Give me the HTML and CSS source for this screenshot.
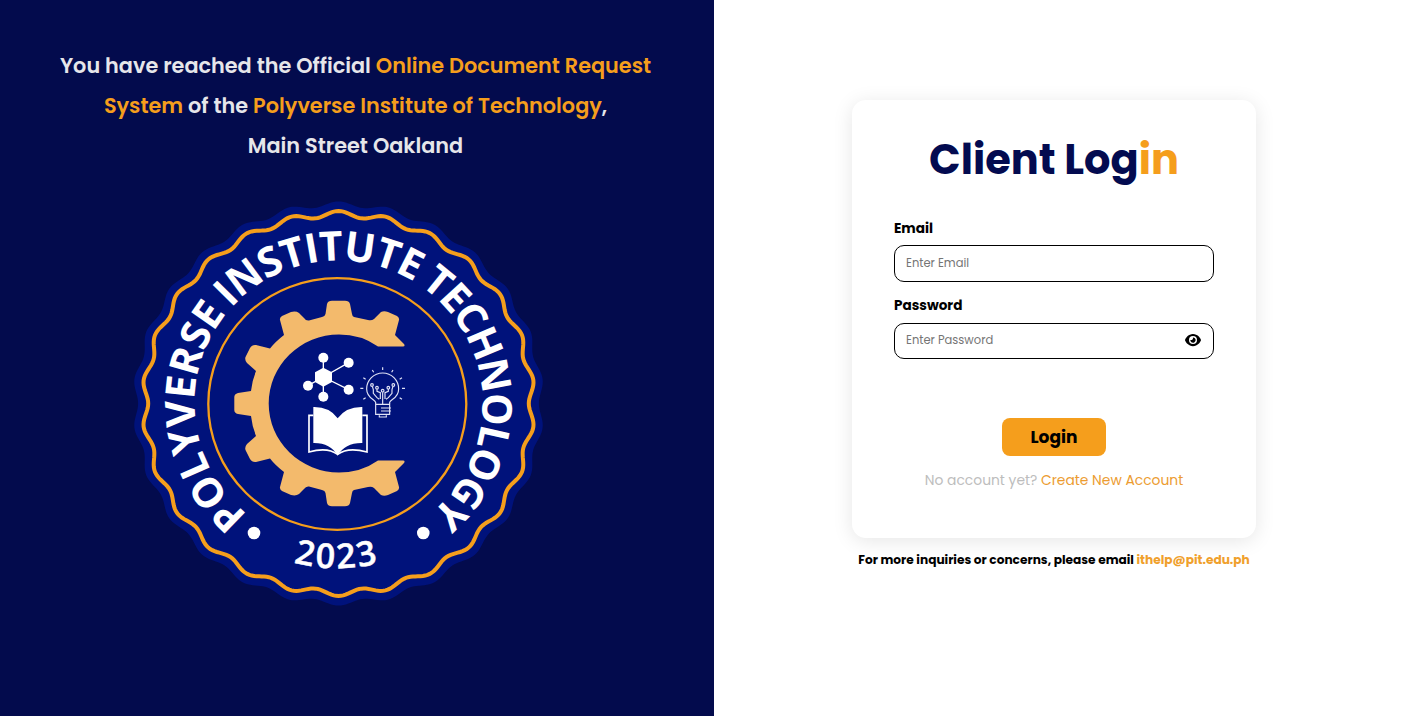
FILE: index.html
```html
<!DOCTYPE html>
<html lang="en">
<head>
<meta charset="utf-8">
<title>Client Login</title>
<link rel="stylesheet" href="styles.css">
</head>
<body>
<main class="page">
  <section class="welcome">
    <h2 class="welcome-text">
      <span class="line">You have reached the Official <em>Online Document Request</em></span>
      <span class="line"><em>System</em> of the <em>Polyverse Institute of Technology</em>,</span>
      <span class="line">Main Street Oakland</span>
    </h2>
    <svg class="seal" viewBox="128 194 422 418" width="422" height="418" role="img" aria-label="Polyverse Institute Technology seal">
      <path id="rim" class="seal-blue"/>
      <path id="wave" class="seal-wave"/>
      <ellipse class="seal-ring" cx="337.3" cy="404" rx="129" ry="125.8"/>
      <path id="nameArc" fill="none" d="M247.900 514.600A144 143 0 1 1 425.200 517.700"/>
      <text class="seal-name"><textPath href="#nameArc" textLength="225" lengthAdjust="spacing">POLYVERSE</textPath></text>
      <text class="seal-name"><textPath href="#nameArc" startOffset="231.6" textLength="201" lengthAdjust="spacing">INSTITUTE</textPath></text>
      <text class="seal-name"><textPath href="#nameArc" startOffset="439" textLength="264" lengthAdjust="spacing">TECHNOLOGY</textPath></text>
      <path id="yearArc" fill="none" d="M221 521A166 166 0 0 0 453 521"/>
      <text class="seal-year"><textPath href="#yearArc" startOffset="50%" text-anchor="middle">2023</textPath></text>
      <circle class="white" cx="254" cy="533" r="6.3"/>
      <circle class="white" cx="423.3" cy="533" r="6.3"/>
      <path class="gear" d="M378 346.5H403Q405.500 346.500 404 344L395 335L399 320Q399.500 317.500 397 316L388 312Q384 310.500 381 312L374 319Q371.500 321 368 320L354 317Q352.300 316.500 352 314L350 304Q349 300.700 345 300.700H332Q328 300.700 327 304L325.500 314Q325 316.500 322 317L309 320.500Q306 321 304 318L299 313Q296 310.700 291 312L282 316Q279.500 317.500 280 320L284 335Q275 342 270 348.500L256 345Q252 344.500 250 348L245.500 357Q244.500 360 247 363L256 371Q252 381 251 391L238 393Q234.300 394 234.300 397V410Q234.300 413 238 414L251 416Q252 426 256 436L247 444Q244.500 447 245.500 450L250 459Q252 462.500 256 462L270 458.500Q275 465 284 472L280 487Q279.500 489.500 282 491L291 495Q296 496.300 299 494L304 489Q306 486 309 486.500L322 490Q325 490.500 325.500 493L327 503Q328 506.300 332 506.300H345Q349 506.300 350 503L352 493Q352.300 490.500 354 490L368 487Q371.500 486 374 488L381 495Q384 496.500 388 495L397 491Q399.500 489.500 399 487L395 472L404 463Q405.500 460.500 403 460.500H378Q361 472.500 339 472.500A70.300 69 0 0 1 339 334.500Q361 334.500 378 346.500Z"/>
      <g transform="translate(290 340) scale(.3333)">
        <path class="link" d="M100 53V170M100 111L176 68M100 111L176 149M100 111L54 137"/>
        <path class="white" d="M100 83L126 97V126L100 140L75 126V97Z"/>
        <circle class="white" cx="100" cy="53" r="15"/><circle class="white" cx="176" cy="68" r="15"/>
        <circle class="white" cx="176" cy="149" r="15"/><circle class="white" cx="100" cy="170" r="15"/>
        <circle class="white" cx="54" cy="137" r="15"/>
        <path class="white" d="M70 201Q119 200 143 235Q168 200 217 201V309Q165 308 143 347Q121 308 70 309Z"/>
        <path class="book-line" d="M70 226H57V336Q112 320 143 343Q174 320 231 336V226H217"/>
        <g class="bulb">
          <path d="M257 192V187C255 178 230 175 230 147A48 48 0 1 1 326 147C326 175 301 178 299 187V192"/>
          <path d="M257 193H299V223H257ZM273 204H303M273 213H303M268 226V231H289V226M278 82V90M247 90L251 97M309 90L305 97M220 113L227 118M336 113L329 118M211 145H220M336 145H345M220 178L227 173M336 178L329 173"/>
          <path d="M278 157V192M247 139L250 149V160L261 173L268 178M261 147V154L271 158V177M309 139L306 149V160L295 173L288 178M295 147V154L285 158V177"/>
          <circle cx="278" cy="152" r="4"/><circle cx="246" cy="135" r="4"/><circle cx="310" cy="135" r="4"/><circle cx="261" cy="143" r="4"/><circle cx="295" cy="143" r="4"/>
        </g>
      </g>
    </svg>
  </section>
  <section class="login">
    <form class="card">
      <h1 class="title">Client Log<span>in</span></h1>
      <label class="label label-email" for="email">Email</label>
      <div class="field"><input id="email" type="text" placeholder="Enter Email"></div>
      <label class="label label-password" for="password">Password</label>
      <div class="field field-password">
        <input id="password" class="password" type="password" placeholder="Enter Password">
        <svg class="eye" viewBox="0 0 576 512" width="16" height="14.200"><path d="M288 32c-80.800 0-145.500 36.800-192.600 80.600C48.600 156 17.300 208 2.500 243.700c-3.300 7.900-3.300 16.700 0 24.600C17.300 304 48.600 356 95.400 399.400C142.500 443.200 207.200 480 288 480s145.500-36.800 192.600-80.600c46.800-43.500 78.100-95.400 93-131.100c3.300-7.900 3.300-16.700 0-24.600c-14.900-35.700-46.200-87.700-93-131.100C433.500 68.800 368.800 32 288 32zM144 256a144 144 0 1 1 288 0 144 144 0 1 1 -288 0zm144-64c0 35.300-28.700 64-64 64c-7.100 0-13.900-1.200-20.300-3.300c-5.500-1.800-11.900 1.600-11.700 7.400c.3 6.900 1.300 13.800 3.200 20.700c13.700 51.200 66.400 81.600 117.600 67.900s81.600-66.400 67.900-117.600c-11.100-41.500-47.800-69.400-88.600-71.100c-5.800-.2-9.200 6.100-7.400 11.700c2.100 6.400 3.300 13.200 3.300 20.300z"/></svg>
      </div>
      <button class="submit" type="button">Login</button>
      <p class="signup">No account yet? <a>Create New Account</a></p>
    </form>
    <p class="help">For more inquiries or concerns, please email <a>ithelp@pit.edu.ph</a></p>
  </section>
</main>
<script src="seal.js"></script>
</body>
</html>
```
FILE: styles.css
```css
* { box-sizing: border-box; margin: 0; }
body { font-family: Poppins, Inter, sans-serif; background: #fff; color: #000; }
.page { display: grid; grid-template-columns: 1fr 1fr; height: 716px; overflow: hidden; }
.welcome { background: #030b4d; padding-top: 46px; display: flex; flex-direction: column; align-items: center; }
.welcome-text { width: 711px; margin-right: 3px; font-size: 20.8px; font-weight: 600; line-height: 40px; color: #e6e6ea; text-align: center; }
.line { display: block; white-space: nowrap; }
.line em { font-style: normal; color: #f59e1c; }
.seal { display: block; margin: 28px 36px 0 0; }
.seal-blue { fill: #00127b; }
.seal-wave { fill: none; stroke: #f59e1c; stroke-width: 4; }
.seal-ring { fill: none; stroke: #f59e1c; stroke-width: 2.3; }
.seal-name { font: 700 41px "Open Sans", sans-serif; fill: #fff; }
.seal-year { font: 600 34px "Open Sans", sans-serif; fill: #fff; stroke: #fff; stroke-width: .5px; letter-spacing: 2.500px; }
.white { fill: #fff; }
.gear { fill: #f3ba6c; }
.link { fill: none; stroke: #fff; stroke-width: 4; }
.book-line { fill: none; stroke: #fff; stroke-width: 5; }
.bulb { fill: none; stroke: #dfe2f5; stroke-width: 3.500; }
.login { display: flex; flex-direction: column; align-items: center; padding: 100px 34px 0 0; }
.card { width: 404px; height: 438px; padding: 30px 42px 0; border-radius: 14px; background: #fff; box-shadow: 0 3px 20px rgba(0, 0, 0, .1); display: flex; flex-direction: column; }
.title { font-size: 41.500px; line-height: 60px; font-weight: 700; color: #030b50; text-align: center; white-space: nowrap; }
.title span { color: #f59e1c; }
.label { font-size: 13.600px; line-height: 20px; font-weight: 700; }
.label-email { margin-top: 29px; }
.label-password { margin-top: 14px; }
.field { display: flex; align-items: center; height: 36.500px; margin-top: 6px; padding: 0 12px 0 11px; border: 1px solid #000; border-radius: 10px; }
.field-password { margin-top: 7px; }
.field input { flex: 1; min-width: 0; border: 0; outline: 0; padding: 0; background: none; font: 400 11.500px Poppins, Inter, sans-serif; }
.field input::placeholder { color: #757575; }
.eye { margin-bottom: 2px; }
.submit { align-self: center; width: 104px; height: 38.500px; margin-top: 58.500px; padding: 0; border: 0; border-radius: 8px; background: #f59e1c; color: #000; font: 700 17px Poppins, Inter, sans-serif; }
.signup { margin-top: 13.500px; text-align: center; font-size: 13.850px; line-height: 20px; color: #bdbdbd; white-space: nowrap; }
.signup a { color: #ec9c31; }
.help { margin-top: 12px; font-size: 12.160px; line-height: 20px; font-weight: 700; white-space: nowrap; }
.help a { color: #f0a02c; }
```
FILE: seal.js
```js
// Scalloped edge with 26 lobes, one of them at twelve o'clock.
function scallop(rx, ry, depth) {
  const points = [];
  for (let i = 0; i < 520; i++) {
    const t = (i / 520) * Math.PI * 2;
    const d = depth * Math.cos(26 * t);
    points.push((338.5 + (rx + d) * Math.sin(t)).toFixed(2) + ' ' + (403.5 - (ry + d) * Math.cos(t)).toFixed(2));
  }
  return 'M' + points.join('L') + 'Z';
}
document.getElementById('rim').setAttribute('d', scallop(203, 199.5, 2.6));
document.getElementById('wave').setAttribute('d', scallop(193.3, 189.5, 3));
```
